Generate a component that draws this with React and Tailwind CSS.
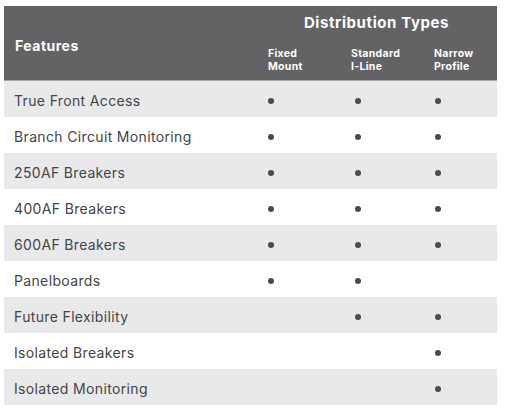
import React from "react";

const rows = [
  { name: "True Front Access", v: [1, 1, 1] },
  { name: "Branch Circuit Monitoring", v: [1, 1, 1] },
  { name: "250AF Breakers", v: [1, 1, 1] },
  { name: "400AF Breakers", v: [1, 1, 1] },
  { name: "600AF Breakers", v: [1, 1, 1] },
  { name: "Panelboards", v: [1, 1, 0] },
  { name: "Future Flexibility", v: [0, 1, 1] },
  { name: "Isolated Breakers", v: [0, 0, 1] },
  { name: "Isolated Monitoring", v: [0, 0, 1] },
];

// dot offsets inside each type column
const dotPad = ["pl-[4px]", "pl-[8px]", "pl-[5px]"];

function Dot() {
  return <span className="block w-[6px] h-[6px] rounded-full bg-[#4b4b4d]" />;
}

export default function App() {
  return (
    <div
      className="w-[508px] h-[415px] bg-white pt-[6px] pl-[4px]"
      style={{ fontFamily: "Inter, 'Liberation Sans', sans-serif" }}
    >
      <div className="w-[493px]">
        <div className="h-[75px] bg-[#636365] border-b border-[#a7a7a9] grid grid-cols-[260px_233px] text-white">
          <div className="flex items-center pl-[11px] pt-[4px] text-[14px] font-bold tracking-[0.5px]">
            Features
          </div>
          <div className="flex flex-col">
            <div className="h-[33px] flex items-center justify-center pr-[8px] pt-[1px] text-[15px] font-bold tracking-[0.6px]">
              Distribution Types
            </div>
            <div className="pt-[9px] grid grid-cols-[83px_83px_67px] text-[10.5px] font-bold leading-[12.5px] tracking-[0.3px]">
              <div className="pl-[4px]">
                Fixed
                <br />
                Mount
              </div>
              <div className="pl-[4px]">
                Standard
                <br />
                I-Line
              </div>
              <div className="pl-[4px]">
                Narrow
                <br />
                Profile
              </div>
            </div>
          </div>
        </div>
        {rows.map((r, i) => (
          <div
            key={r.name}
            className={
              "h-[36px] grid grid-cols-[260px_83px_83px_67px] items-center text-[14px] tracking-[0.35px] text-[#444446] " +
              (i % 2 === 0 ? "bg-[#e9e9eb]" : "bg-white")
            }
          >
            <div className="pl-[10px] pt-[3px]">{r.name}</div>
            {r.v.map((on, j) => (
              <div key={j} className={dotPad[j] + " pt-[4px]"}>
                {on ? <Dot /> : null}
              </div>
            ))}
          </div>
        ))}
      </div>
    </div>
  );
}
